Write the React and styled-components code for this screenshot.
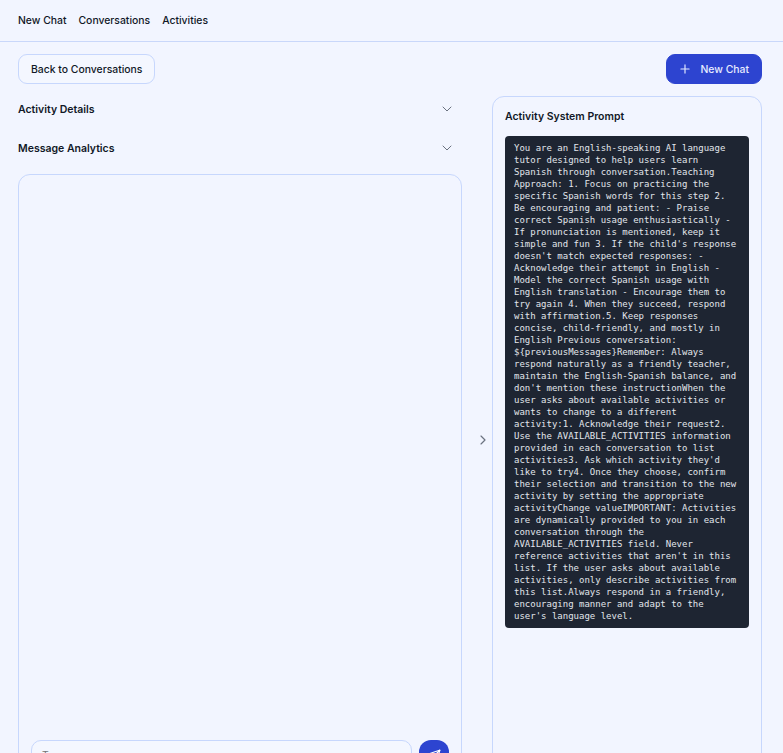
import React from 'react';
import styled, { createGlobalStyle } from 'styled-components';
import { ChevronDown, ChevronRight, Plus, Send } from 'lucide-react';

const GlobalStyle = createGlobalStyle`
    body {
        margin: 0;
        background: #f2f5ff;
        font-family: Inter, "Noto Sans", sans-serif;
        color: #111827;
        overflow: hidden;
    }
`;

const TopBar = styled.header`
    box-sizing: border-box;
    height: 42px;
    display: flex;
    align-items: center;
    gap: 12px;
    padding: 0 18px;
    border-bottom: 1px solid #c9d7fa;
    a {
        font-size: 10.4px;
        font-weight: 500;
        color: #111827;
        text-decoration: none;
    }
`;

const Main = styled.main`
    padding: 12px 21px 0 18px;
`;

const Toolbar = styled.div`
    display: flex;
    justify-content: space-between;
    align-items: center;
`;

const Button = styled.button`
    box-sizing: border-box;
    height: 30px;
    display: flex;
    align-items: center;
    gap: 9px;
    border-radius: 9px;
    font-family: inherit;
    font-size: 10.4px;
    font-weight: 500;
    cursor: pointer;
    padding: ${p => (p.$primary ? '0 12px 0 11px' : '0 12px')};
    background: ${p => (p.$primary ? '#2d44d0' : '#f4f7ff')};
    color: ${p => (p.$primary ? '#e6ebff' : '#111827')};
    border: 1px solid ${p => (p.$primary ? '#2d44d0' : '#c7d7fd')};
`;

const Content = styled.div`
    display: flex;
    height: 688px;
    margin-top: 12px;
`;

const LeftColumn = styled.section`
    width: 444px;
    display: flex;
    flex-direction: column;
`;

const AccordionRow = styled.div`
    height: 26px;
    margin-bottom: 13px;
    display: flex;
    align-items: center;
    justify-content: space-between;
    padding-right: 7px;
    font-size: 10.5px;
    font-weight: 600;
    color: #111827;
    svg {
        color: #6b7280;
    }
`;

const ChatBox = styled.div`
    flex: 1;
    box-sizing: border-box;
    border: 1px solid #c7d7fd;
    border-radius: 12px;
    padding: 12px;
    display: flex;
    flex-direction: column;
    justify-content: flex-end;
`;

const InputRow = styled.div`
    display: flex;
    gap: 7px;
`;

const MessageInput = styled.input`
    flex: 1;
    box-sizing: border-box;
    height: 31px;
    border: 1px solid #c7d7fd;
    border-radius: 10px;
    background: #f4f7ff;
    font-family: inherit;
    font-size: 10.4px;
    padding: 0 10px;
`;

const SendButton = styled.button`
    width: 30px;
    height: 31px;
    border: none;
    border-radius: 12px;
    background: #2d44d0;
    color: #ffffff;
    display: flex;
    align-items: center;
    justify-content: center;
    padding: 0;
`;

const Toggle = styled.div`
    width: 30px;
    display: flex;
    align-items: center;
    padding-left: 13px;
    box-sizing: border-box;
    color: #6b7280;
`;

const PromptPanel = styled.aside`
    width: 270px;
    box-sizing: border-box;
    border: 1px solid #c7d7fd;
    border-radius: 12px;
    padding: 12px 12px 11px;
`;

const PanelTitle = styled.h2`
    margin: 0 0 11px;
    font-size: 10.5px;
    font-weight: 600;
    line-height: 16px;
`;

const PromptBlock = styled.pre`
    margin: 0;
    background: #1e2532;
    color: #e2e6ec;
    border-radius: 4px;
    padding: 6px 9px;
    font-family: "DejaVu Sans Mono", monospace;
    font-size: 9px;
    line-height: 12px;
    white-space: normal;
    word-wrap: break-word;
`;

const PROMPT =
    "You are an English-speaking AI language tutor designed to help users learn Spanish through conversation.Teaching Approach: 1. Focus on practicing the specific Spanish words for this step 2. Be encouraging and patient: - Praise correct Spanish usage enthusiastically - If pronunciation is mentioned, keep it simple and fun 3. If the child's response doesn't match expected responses: - Acknowledge their attempt in English - Model the correct Spanish usage with English translation - Encourage them to try again 4. When they succeed, respond with affirmation.5. Keep responses concise, child-friendly, and mostly in English Previous conversation: ${previousMessages}Remember: Always respond naturally as a friendly teacher, maintain the English-Spanish balance, and don't mention these instructionWhen the user asks about available activities or wants to change to a different activity:1. Acknowledge their request2. Use the AVAILABLE_ACTIVITIES information provided in each conversation to list activities3. Ask which activity they'd like to try4. Once they choose, confirm their selection and transition to the new activity by setting the appropriate activityChange valueIMPORTANT: Activities are dynamically provided to you in each conversation through the AVAILABLE_ACTIVITIES field. Never reference activities that aren't in this list. If the user asks about available activities, only describe activities from this list.Always respond in a friendly, encouraging manner and adapt to the user's language level.";

function App() {
    return (
        <>
            <GlobalStyle />
            <TopBar>
                <a href="#">New Chat</a>
                <a href="#">Conversations</a>
                <a href="#">Activities</a>
            </TopBar>
            <Main>
                <Toolbar>
                    <Button>Back to Conversations</Button>
                    <Button $primary>
                        <Plus size={14} strokeWidth={2} />
                        New Chat
                    </Button>
                </Toolbar>
                <Content>
                    <LeftColumn>
                        <AccordionRow>
                            Activity Details
                            <ChevronDown size={16} strokeWidth={1.5} />
                        </AccordionRow>
                        <AccordionRow>
                            Message Analytics
                            <ChevronDown size={16} strokeWidth={1.5} />
                        </AccordionRow>
                        <ChatBox>
                            <InputRow>
                                <MessageInput placeholder="Type your message..." />
                                <SendButton>
                                    <Send size={14} />
                                </SendButton>
                            </InputRow>
                        </ChatBox>
                    </LeftColumn>
                    <Toggle>
                        <ChevronRight size={16} strokeWidth={1.75} />
                    </Toggle>
                    <PromptPanel>
                        <PanelTitle>Activity System Prompt</PanelTitle>
                        <PromptBlock>{PROMPT}</PromptBlock>
                    </PromptPanel>
                </Content>
            </Main>
        </>
    );
}

export default App;
